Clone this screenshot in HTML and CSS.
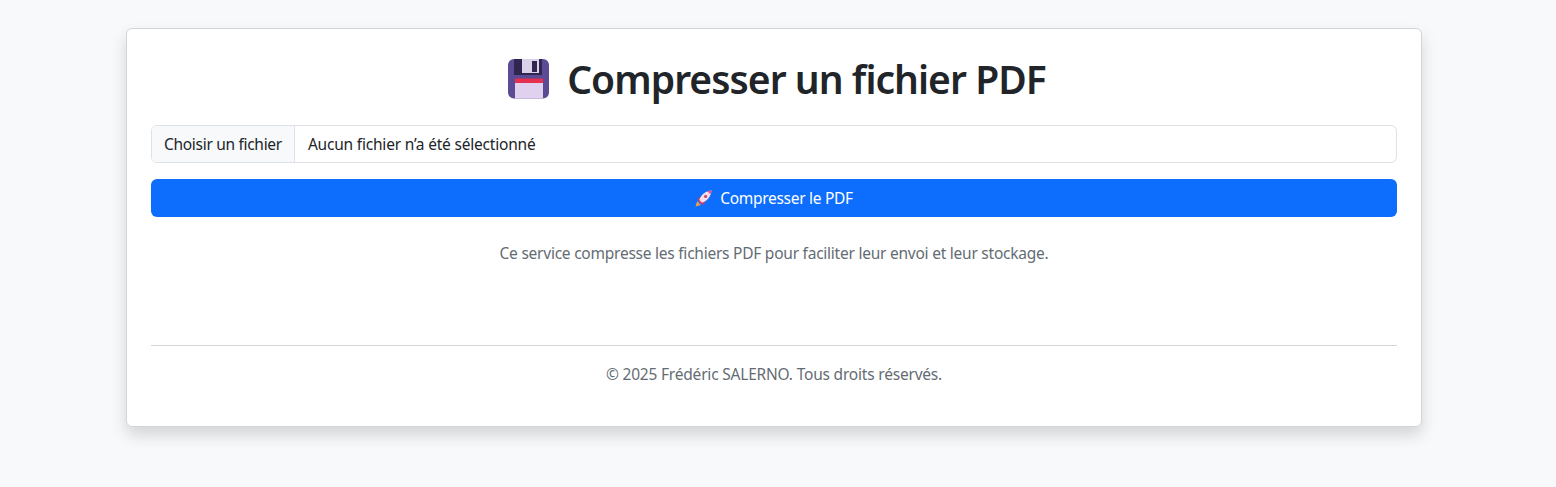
FILE: index.html
```html
<!DOCTYPE html>
<html lang="fr">
<head>
<meta charset="utf-8">
<title>Compresser un fichier PDF</title>
<link rel="stylesheet" href="styles.css">
</head>
<body>
<main class="card">
  <h1 class="title">
    <svg class="disk" viewBox="0 0 42 42" aria-hidden="true">
      <rect x="1" y="1" width="41" height="39.500" rx="6" fill="#5b4a94"/>
      <path fill="#2f2750" d="M7 1h28v16H7z"/>
      <path fill="#d9d2ea" d="M15 1h17v14H15z"/>
      <path fill="#2f2750" d="M25 3h5v11h-5z"/>
      <path fill="#e0d2ee" d="M8 24h28v16.500H8z"/>
      <path fill="#e5304f" d="M8 20.500h28V25H8z"/>
    </svg>
    <span>Compresser un fichier PDF</span>
  </h1>
  <div class="file">
    <span class="file-btn">Choisir un fichier</span>
    <span class="file-name">Aucun fichier n’a été sélectionné</span>
  </div>
  <button class="submit" type="button">
    <svg class="rocket" viewBox="0 0 16 16" aria-hidden="true">
      <path fill="#f0a04b" d="M0.500 15.500l1.500-5 3.500 3.500z"/>
      <path fill="#b23f7e" d="M2 8l4-2 4 4-2 4.500z"/>
      <path fill="#f6dfe8" d="M4 9.500C5.500 4.500 10 1 15.500 0.500 15 6 11.500 10.500 6.500 12z"/>
      <path fill="#f2487c" d="M11.500 1.300c1 .2 2.400 1.700 2.800 2.900 .6-1.100 1-2.400 1.200-3.700-1.400.1-2.800.4-4 .8z"/>
      <path fill="#ef3f72" d="M4 9.300l2.700 2.700-1.300 1-2.400-2.400z"/>
      <circle cx="10" cy="6" r="1.600" fill="#c4557f"/>
    </svg>
    <span>Compresser le PDF</span>
  </button>
  <p class="info">Ce service compresse les fichiers PDF pour faciliter leur envoi et leur stockage.</p>
  <hr class="rule">
  <p class="copy">© 2025 Frédéric SALERNO. Tous droits réservés.</p>
</main>
</body>
</html>
```
FILE: styles.css
```css
* { box-sizing: border-box; }
html, body { margin: 0; height: 100%; }
body {
  background: #f8f9fa;
  color: #212529;
  font-family: "Noto Sans", "Open Sans", sans-serif;
  font-size: 16px;
  line-height: 24px;
  padding: 28px 8px 0 0;
  overflow: hidden;
}
.card {
  width: 1296px;
  height: 399px;
  margin: 0 auto;
  padding: 24px;
  background: #fff;
  border: 1px solid #d3d5d7;
  border-radius: 6px;
  box-shadow: 0 8px 16px rgba(0, 0, 0, .15);
}
.title {
  margin: 0 0 21px;
  height: 51px;
  padding-left: 5px;
  display: flex;
  align-items: center;
  justify-content: center;
  gap: 18px;
  font-size: 39px;
  font-weight: 600;
  line-height: 48px;
  letter-spacing: -.95px;
}
.disk { width: 42px; height: 42px; flex: none; }
.file {
  display: flex;
  height: 38px;
  border: 1px solid #dee2e6;
  border-radius: 6px;
  overflow: hidden;
  letter-spacing: -.2px;
  font-size: 15.5px;
}
.file-btn {
  padding: 6px 12px;
  background: #f8f9fa;
  border-right: 1px solid #dee2e6;
  letter-spacing: -.3px;
}
.file-name { padding: 6px 12px 6px 13px; }
.submit {
  width: 100%;
  height: 38px;
  margin-top: 16px;
  display: flex;
  align-items: center;
  justify-content: center;
  gap: 8px;
  background: #0d6efd;
  border: 0;
  border-radius: 6px;
  color: #fff;
  font: inherit;
  letter-spacing: -.3px;
  font-size: 15.5px;
}
.rocket { width: 17px; height: 17px; flex: none; }
.info, .copy {
  margin: 0;
  text-align: center;
  color: #646c73;
  letter-spacing: -.24px;
  font-size: 15.5px;
}
.copy { letter-spacing: -.2px; }
.info { margin-top: 24px; }
.rule {
  margin: 80px 0 0;
  border: 0;
  border-top: 1px solid #d3d4d5;
}
.copy { margin-top: 16px; }
```
